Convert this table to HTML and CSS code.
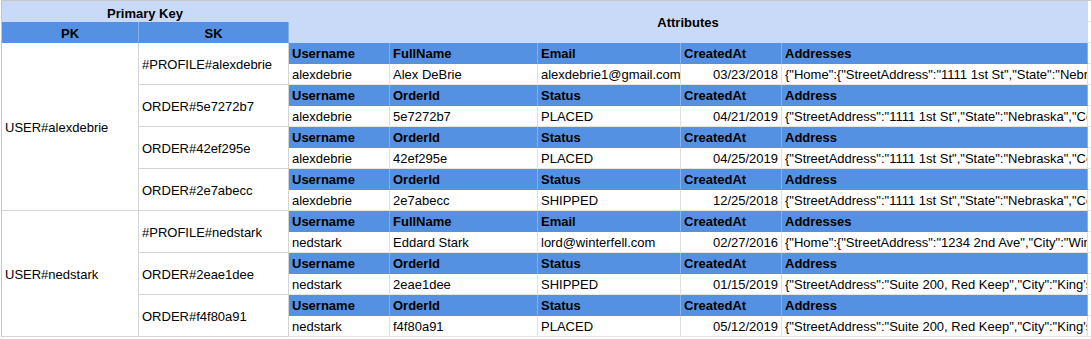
FILE: index.html
```html
<!DOCTYPE html>
<html>
<head>
<meta charset="utf-8">
<link rel="stylesheet" href="styles.css">
</head>
<body>
<div class="sheet">
  <div class="c lh cspan2 bottom0">Primary Key</div>
  <div class="c lh cspan5 rspan2 mid">Attributes</div>
  <div class="c ex"></div>

  <div class="c dh center">PK</div>
  <div class="c dh center">SK</div>
  <div class="c ex"></div>

  <div class="c kw rspan8 mid">USER#alexdebrie</div>
  <div class="c kw rspan2 mid">#PROFILE#alexdebrie</div>
  <div class="c hd">Username</div><div class="c hd">FullName</div><div class="c hd">Email</div><div class="c hd">CreatedAt</div><div class="c hd">Addresses</div>
  <div class="c ex"></div>
  <div class="c dt">alexdebrie</div><div class="c dt">Alex DeBrie</div><div class="c dt">alexdebrie1@gmail.com</div><div class="c dt num">03/23/2018</div><div class="c dt">{"Home":{"StreetAddress":"1111 1st St","State":"Nebraska","Country":"US"}}</div>
  <div class="c ex"></div>

  <div class="c kw rspan2 mid">ORDER#5e7272b7</div>
  <div class="c hd">Username</div><div class="c hd">OrderId</div><div class="c hd">Status</div><div class="c hd">CreatedAt</div><div class="c hd">Address</div>
  <div class="c ex"></div>
  <div class="c dt">alexdebrie</div><div class="c dt">5e7272b7</div><div class="c dt">PLACED</div><div class="c dt num">04/21/2019</div><div class="c dt">{"StreetAddress":"1111 1st St","State":"Nebraska","Country":"US"}</div>
  <div class="c ex"></div>

  <div class="c kw rspan2 mid">ORDER#42ef295e</div>
  <div class="c hd">Username</div><div class="c hd">OrderId</div><div class="c hd">Status</div><div class="c hd">CreatedAt</div><div class="c hd">Address</div>
  <div class="c ex"></div>
  <div class="c dt">alexdebrie</div><div class="c dt">42ef295e</div><div class="c dt">PLACED</div><div class="c dt num">04/25/2019</div><div class="c dt">{"StreetAddress":"1111 1st St","State":"Nebraska","Country":"US"}</div>
  <div class="c ex"></div>

  <div class="c kw rspan2 mid">ORDER#2e7abecc</div>
  <div class="c hd">Username</div><div class="c hd">OrderId</div><div class="c hd">Status</div><div class="c hd">CreatedAt</div><div class="c hd">Address</div>
  <div class="c ex"></div>
  <div class="c dt">alexdebrie</div><div class="c dt">2e7abecc</div><div class="c dt">SHIPPED</div><div class="c dt num">12/25/2018</div><div class="c dt">{"StreetAddress":"1111 1st St","State":"Nebraska","Country":"US"}</div>
  <div class="c ex"></div>

  <div class="c kw rspan6 mid">USER#nedstark</div>
  <div class="c kw rspan2 mid">#PROFILE#nedstark</div>
  <div class="c hd">Username</div><div class="c hd">FullName</div><div class="c hd">Email</div><div class="c hd">CreatedAt</div><div class="c hd">Addresses</div>
  <div class="c ex"></div>
  <div class="c dt">nedstark</div><div class="c dt">Eddard Stark</div><div class="c dt">lord@winterfell.com</div><div class="c dt num">02/27/2016</div><div class="c dt">{"Home":{"StreetAddress":"1234 2nd Ave","City":"Winterfell","State":"The North"}}</div>
  <div class="c ex"></div>

  <div class="c kw rspan2 mid">ORDER#2eae1dee</div>
  <div class="c hd">Username</div><div class="c hd">OrderId</div><div class="c hd">Status</div><div class="c hd">CreatedAt</div><div class="c hd">Address</div>
  <div class="c ex"></div>
  <div class="c dt">nedstark</div><div class="c dt">2eae1dee</div><div class="c dt">SHIPPED</div><div class="c dt num">01/15/2019</div><div class="c dt">{"StreetAddress":"Suite 200, Red Keep","City":"King's Landing","State":"Crownlands"}</div>
  <div class="c ex"></div>

  <div class="c kw rspan2 mid">ORDER#f4f80a91</div>
  <div class="c hd">Username</div><div class="c hd">OrderId</div><div class="c hd">Status</div><div class="c hd">CreatedAt</div><div class="c hd">Address</div>
  <div class="c ex"></div>
  <div class="c dt">nedstark</div><div class="c dt">f4f80a91</div><div class="c dt">PLACED</div><div class="c dt num">05/12/2019</div><div class="c dt">{"StreetAddress":"Suite 200, Red Keep","City":"King's Landing","State":"Crownlands"}</div>
  <div class="c ex"></div>
</div>
</body>
</html>
```

FILE: styles.css
```css
html, body {
  margin: 0;
  padding: 0;
  background: #ffffff;
}

body {
  width: 1091px;
  height: 339px;
  overflow: hidden;
  font-family: "Liberation Sans", Arial, sans-serif;
  font-size: 13px;
  color: #000000;
}

.sheet {
  margin-left: 1px;
  display: grid;
  grid-template-columns: 137px 150px 101px 148px 143px 101px 306px 1fr;
  grid-auto-rows: 21px;
  border-top: 1px solid #c8c8c8;
  border-left: 1px solid #c8c8c8;
}

.c {
  box-sizing: border-box;
  display: flex;
  align-items: flex-end;
  padding: 0 3px 2px 3px;
  line-height: 15px;
  white-space: nowrap;
  overflow: hidden;
  border-right: 1px solid #d4d4d4;
  border-bottom: 1px solid #d4d4d4;
  min-width: 0;
}

.cspan2 { grid-column: span 2; }
.cspan5 { grid-column: span 5; }
.rspan2 { grid-row: span 2; }
.rspan6 { grid-row: span 6; }
.rspan8 { grid-row: span 8; }

.lh {
  background: #c9daf8;
  border-color: #c9daf8;
  font-weight: bold;
  justify-content: center;
}

.bottom0 {
  padding-bottom: 0;
}

.dh {
  background: #5591e3;
  border-right-color: #86afec;
  border-bottom-color: #5591e3;
  font-weight: bold;
  padding-bottom: 1px;
}

.center {
  justify-content: center;
}

.mid {
  align-items: center;
  padding-top: 2px;
  padding-bottom: 0;
}

.kw {
  background: #ffffff;
}

.hd {
  background: #5591e3;
  border-right-color: #86afec;
  border-bottom-color: #5591e3;
  font-weight: bold;
}

.dt {
  background: #ffffff;
  border-right-color: #e0e0e0;
  border-bottom-color: #e6e6e6;
}

.num {
  justify-content: flex-end;
}

.ex {
  background: #ffffff;
  border-right: none;
  border-bottom-color: #e6e6e6;
}
```
